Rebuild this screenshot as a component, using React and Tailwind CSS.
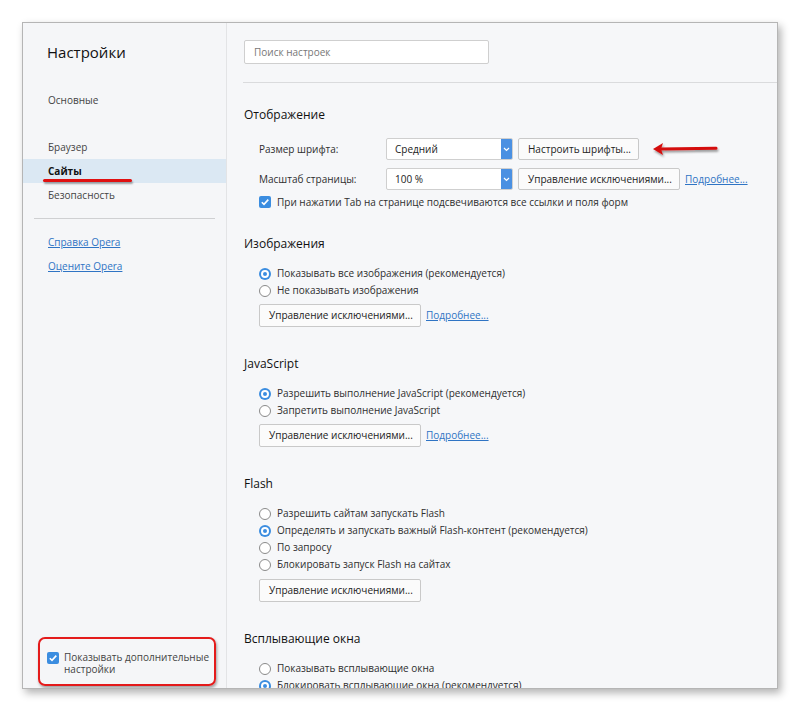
import React from "react";

const font = { fontFamily: '"Open Sans", "Noto Sans", sans-serif' };

function Radio({ checked, children }) {
	return (
		<div className="flex items-center h-[17px]">
			{checked ? (
				<span className="w-[12px] h-[12px] rounded-full bg-[#3b8de0] flex items-center justify-center shrink-0">
					<span className="w-[8px] h-[8px] rounded-full border-2 border-white bg-[#3b8de0]" />
				</span>
			) : (
				<span className="w-[12px] h-[12px] rounded-full border border-[#8a8a8a] bg-white shrink-0" />
			)}
			<span className="ml-[6px] whitespace-nowrap">{children}</span>
		</div>
	);
}

function Check() {
	return (
		<span className="w-[12px] h-[12px] rounded-[2px] bg-[#3b8de0] flex items-center justify-center shrink-0">
			<svg width="10" height="10" viewBox="0 0 10 10">
				<path d="M1.8 5.2 L4 7.4 L8.3 2.6" fill="none" stroke="white" strokeWidth="1.6" />
			</svg>
		</span>
	);
}

function Button({ children, className = "" }) {
	return (
		<div
			className={`flex items-center px-[9px] whitespace-nowrap bg-[#fbfbfb] border border-[#c9c9c9] rounded-[2px] text-[#222] ${className}`}
		>
			{children}
		</div>
	);
}

function Select({ value }) {
	return (
		<div className="w-[127px] h-[22px] flex bg-white border border-[#cfcfcf] rounded-[2px] overflow-hidden">
			<span className="flex-1 flex items-center pl-[8px] text-[#222]">{value}</span>
			<span className="w-[11px] bg-[#4a90e2] flex items-center justify-center">
				<svg width="7" height="5" viewBox="0 0 7 5">
					<path d="M1 1 L3.5 3.5 L6 1" fill="none" stroke="white" strokeWidth="1.2" />
				</svg>
			</span>
		</div>
	);
}

function Link({ children }) {
	return <a className="text-[#2f74c4] underline whitespace-nowrap">{children}</a>;
}

function Heading({ children, className = "" }) {
	return <h2 className={`text-[12px] leading-[20px] text-[#111] ${className}`}>{children}</h2>;
}

export default function App() {
	return (
		<div className="w-[800px] h-[712px] bg-white pt-[22px] pl-[22px]" style={font}>
			<div className="relative w-[756px] h-[667px] border border-[#b5b5b5] shadow-[3px_4px_8px_rgba(0,0,0,0.3)] flex overflow-hidden text-[10px] text-[#2e2e2e]">
				{/* sidebar */}
				<aside className="w-[204px] shrink-0 bg-[#f5f6f8] border-r border-[#e3e4e6] flex flex-col">
					<h1 className="pl-[24px] pt-[17px] text-[15px] leading-[24px] text-[#111]">Настройки</h1>
					<nav className="mt-[24px] flex flex-col">
						<div className="h-[24px] flex items-center pl-[25px] text-[#444]">Основные</div>
						<div className="mt-[23px] h-[24px] flex items-center pl-[25px] text-[#444]">Браузер</div>
						<div className="h-[24px] flex items-center pl-[25px] bg-[#dbe8f3] font-bold text-[#111]">Сайты</div>
						<div className="h-[24px] flex items-center pl-[25px] text-[#444]">Безопасность</div>
					</nav>
					<div className="mx-[11px] mt-[11px] border-t border-[#cfd0d2]" />
					<div className="mt-[11px] flex flex-col pl-[25px]">
						<div className="h-[24px] flex items-center">
							<Link>Справка Opera</Link>
						</div>
						<div className="h-[24px] flex items-center">
							<Link>Оцените Opera</Link>
						</div>
					</div>
					<div className="mt-auto mb-[13px] pl-[24px] flex items-start">
						<span className="mt-[1px]">
							<Check />
						</span>
						<span className="ml-[5px] leading-[12px] text-[#444]">
							Показывать дополнительные
							<br />
							настройки
						</span>
					</div>
				</aside>

				{/* main */}
				<main className="flex-1 bg-[#f6f7f9] flex flex-col">
					<div className="pl-[17px] pt-[17px]">
						<div className="w-[245px] h-[24px] bg-white border border-[#cfcfcf] rounded-[2px] flex items-center pl-[9px] text-[#777]">
							Поиск настроек
						</div>
					</div>
					<div className="ml-[16px] mt-[18px] border-t border-[#dadbdd]" />

					<div className="pl-[17px]">
						{/* Отображение */}
						<Heading className="mt-[22px]">Отображение</Heading>
						<div className="pl-[15px]">
							<div className="mt-[13px] flex items-center">
								<span className="w-[127px]">Размер шрифта:</span>
								<Select value="Средний" />
								<Button className="ml-[5px] w-[121px] h-[22px]">Настроить шрифты...</Button>
							</div>
							<div className="mt-[8px] flex items-center">
								<span className="w-[127px]">Масштаб страницы:</span>
								<Select value="100 %" />
								<Button className="ml-[5px] w-[162px] h-[22px]">Управление исключениями...</Button>
								<span className="ml-[5px]">
									<Link>Подробнее...</Link>
								</span>
							</div>
							<div className="mt-[3px] h-[18px] flex items-center">
								<Check />
								<span className="ml-[6px] whitespace-nowrap">
									При нажатии Tab на странице подсвечиваются все ссылки и поля форм
								</span>
							</div>
						</div>

						{/* Изображения */}
						<Heading className="mt-[23px]">Изображения</Heading>
						<div className="pl-[15px] mt-[11px]">
							<Radio checked>Показывать все изображения (рекомендуется)</Radio>
							<Radio>Не показывать изображения</Radio>
							<div className="mt-[5px] flex items-center">
								<Button className="w-[162px] h-[23px]">Управление исключениями...</Button>
								<span className="ml-[5px]">
									<Link>Подробнее...</Link>
								</span>
							</div>
						</div>

						{/* JavaScript */}
						<Heading className="mt-[27px]">JavaScript</Heading>
						<div className="pl-[15px] mt-[11px]">
							<Radio checked>Разрешить выполнение JavaScript (рекомендуется)</Radio>
							<Radio>Запретить выполнение JavaScript</Radio>
							<div className="mt-[5px] flex items-center">
								<Button className="w-[162px] h-[23px]">Управление исключениями...</Button>
								<span className="ml-[5px]">
									<Link>Подробнее...</Link>
								</span>
							</div>
						</div>

						{/* Flash */}
						<Heading className="mt-[27px]">Flash</Heading>
						<div className="pl-[15px] mt-[11px]">
							<Radio>Разрешить сайтам запускать Flash</Radio>
							<Radio checked>Определять и запускать важный Flash-контент (рекомендуется)</Radio>
							<Radio>По запросу</Radio>
							<Radio>Блокировать запуск Flash на сайтах</Radio>
							<div className="mt-[6px] flex items-center">
								<Button className="w-[162px] h-[23px]">Управление исключениями...</Button>
							</div>
						</div>

						{/* Всплывающие окна */}
						<Heading className="mt-[27px]">Всплывающие окна</Heading>
						<div className="pl-[15px] mt-[11px]">
							<Radio>Показывать всплывающие окна</Radio>
							<Radio checked>Блокировать всплывающие окна (рекомендуется)</Radio>
						</div>
					</div>
				</main>

				{/* annotations */}
				<div className="absolute left-[20px] top-[156px] w-[89px] h-[3px] rounded-full bg-[#e01010] shadow-[1px_2px_2px_rgba(0,0,0,0.35)]" />
				<div className="absolute left-[15px] top-[614px] w-[178px] h-[49px] rounded-[7px] border-2 border-[#e41b1b] shadow-[1px_2px_3px_rgba(0,0,0,0.35)]" />
				<svg className="absolute left-[627px] top-[116px]" width="70" height="20" viewBox="0 0 70 20">
					<defs>
						<filter id="sh" x="-10%" y="-50%" width="130%" height="200%">
							<feDropShadow dx="1" dy="2" stdDeviation="1.2" floodOpacity="0.4" />
						</filter>
					</defs>
					<g filter="url(#sh)">
						<path d="M10 10 L66 9.2" stroke="#d41010" strokeWidth="3" strokeLinecap="round" />
						<path d="M3 10 L13 4 L11 10 L13 16 Z" fill="#d41010" />
					</g>
				</svg>
			</div>
		</div>
	);
}
